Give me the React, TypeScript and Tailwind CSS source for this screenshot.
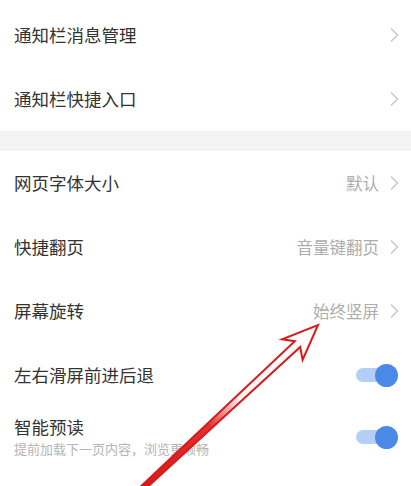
import React from "react";

type NavRow = { title: string; value?: string };

const groupOne: NavRow[] = [
  { title: "通知栏消息管理" },
  { title: "通知栏快捷入口" },
];

const groupTwo: NavRow[] = [
  { title: "网页字体大小", value: "默认" },
  { title: "快捷翻页", value: "音量键翻页" },
  { title: "屏幕旋转", value: "始终竖屏" },
];

function Chevron() {
  return (
    <svg width="10" height="16" viewBox="0 0 10 16" className="shrink-0">
      <path d="M2 1.5 L8.5 8 L2 14.5" fill="none" stroke="#c6c6c6" strokeWidth="1.4" />
    </svg>
  );
}

function Toggle() {
  return (
    <div className="relative flex h-[23px] w-[42px] shrink-0 items-center">
      <div className="h-[14px] w-[38px] rounded-full bg-[#b3cff6]" />
      <div className="absolute right-0 top-0 h-[23px] w-[23px] rounded-full bg-[#4a8ae6]" />
    </div>
  );
}

function NavItem({ title, value }: NavRow) {
  return (
    <div className="flex h-[64px] items-center justify-between pl-[14px] pr-[12px]">
      <span className="text-[17.5px] text-[#333333]">{title}</span>
      <div className="flex items-center gap-[10px]">
        {value && <span className="text-[16.5px] text-[#adadad]">{value}</span>}
        <Chevron />
      </div>
    </div>
  );
}

export default function App() {
  return (
    <div
      className="relative h-[486px] w-[411px] overflow-hidden bg-white"
      style={{ fontFamily: '"Noto Sans CJK SC", "Noto Sans", sans-serif' }}
    >
      <div className="pt-[3px]">
        {groupOne.map((row) => (
          <NavItem key={row.title} {...row} />
        ))}
      </div>

      {/* section gap */}
      <div className="h-[20px] bg-[#f3f3f3]" />

      <div>
        {groupTwo.map((row) => (
          <NavItem key={row.title} {...row} />
        ))}

        <div className="flex h-[64px] items-center justify-between pl-[14px] pr-[13px]">
          <span className="text-[17.5px] text-[#333333]">左右滑屏前进后退</span>
          <Toggle />
        </div>

        <div className="flex items-center justify-between pl-[14px] pr-[13px] pt-[8px]">
          <div className="flex flex-col">
            <span className="text-[17.5px] leading-[24px] text-[#333333]">智能预读</span>
            <span className="text-[13px] leading-[20px] text-[#b5b5b5]">
              提前加载下一页内容，浏览更顺畅
            </span>
          </div>
          <Toggle />
        </div>
      </div>

      {/* annotation arrow */}
      <svg
        className="pointer-events-none absolute left-0 top-0"
        width="411"
        height="486"
        viewBox="0 0 411 486"
      >
        <defs>
          <linearGradient id="shaft" x1="318" y1="325" x2="143" y2="488" gradientUnits="userSpaceOnUse">
            <stop offset="0" stopColor="#ffffff" />
            <stop offset="0.45" stopColor="#fff4f4" />
            <stop offset="0.62" stopColor="#e43030" />
            <stop offset="1" stopColor="#d81818" />
          </linearGradient>
        </defs>
        <polygon
          points="318,325 302.6,359.8 300.2,347 144,490.2 140.6,486.6 294.8,341.2 282.1,339.3"
          fill="url(#shaft)"
          stroke="#d61c1c"
          strokeWidth="2"
          strokeLinejoin="miter"
        />
      </svg>
    </div>
  );
}
